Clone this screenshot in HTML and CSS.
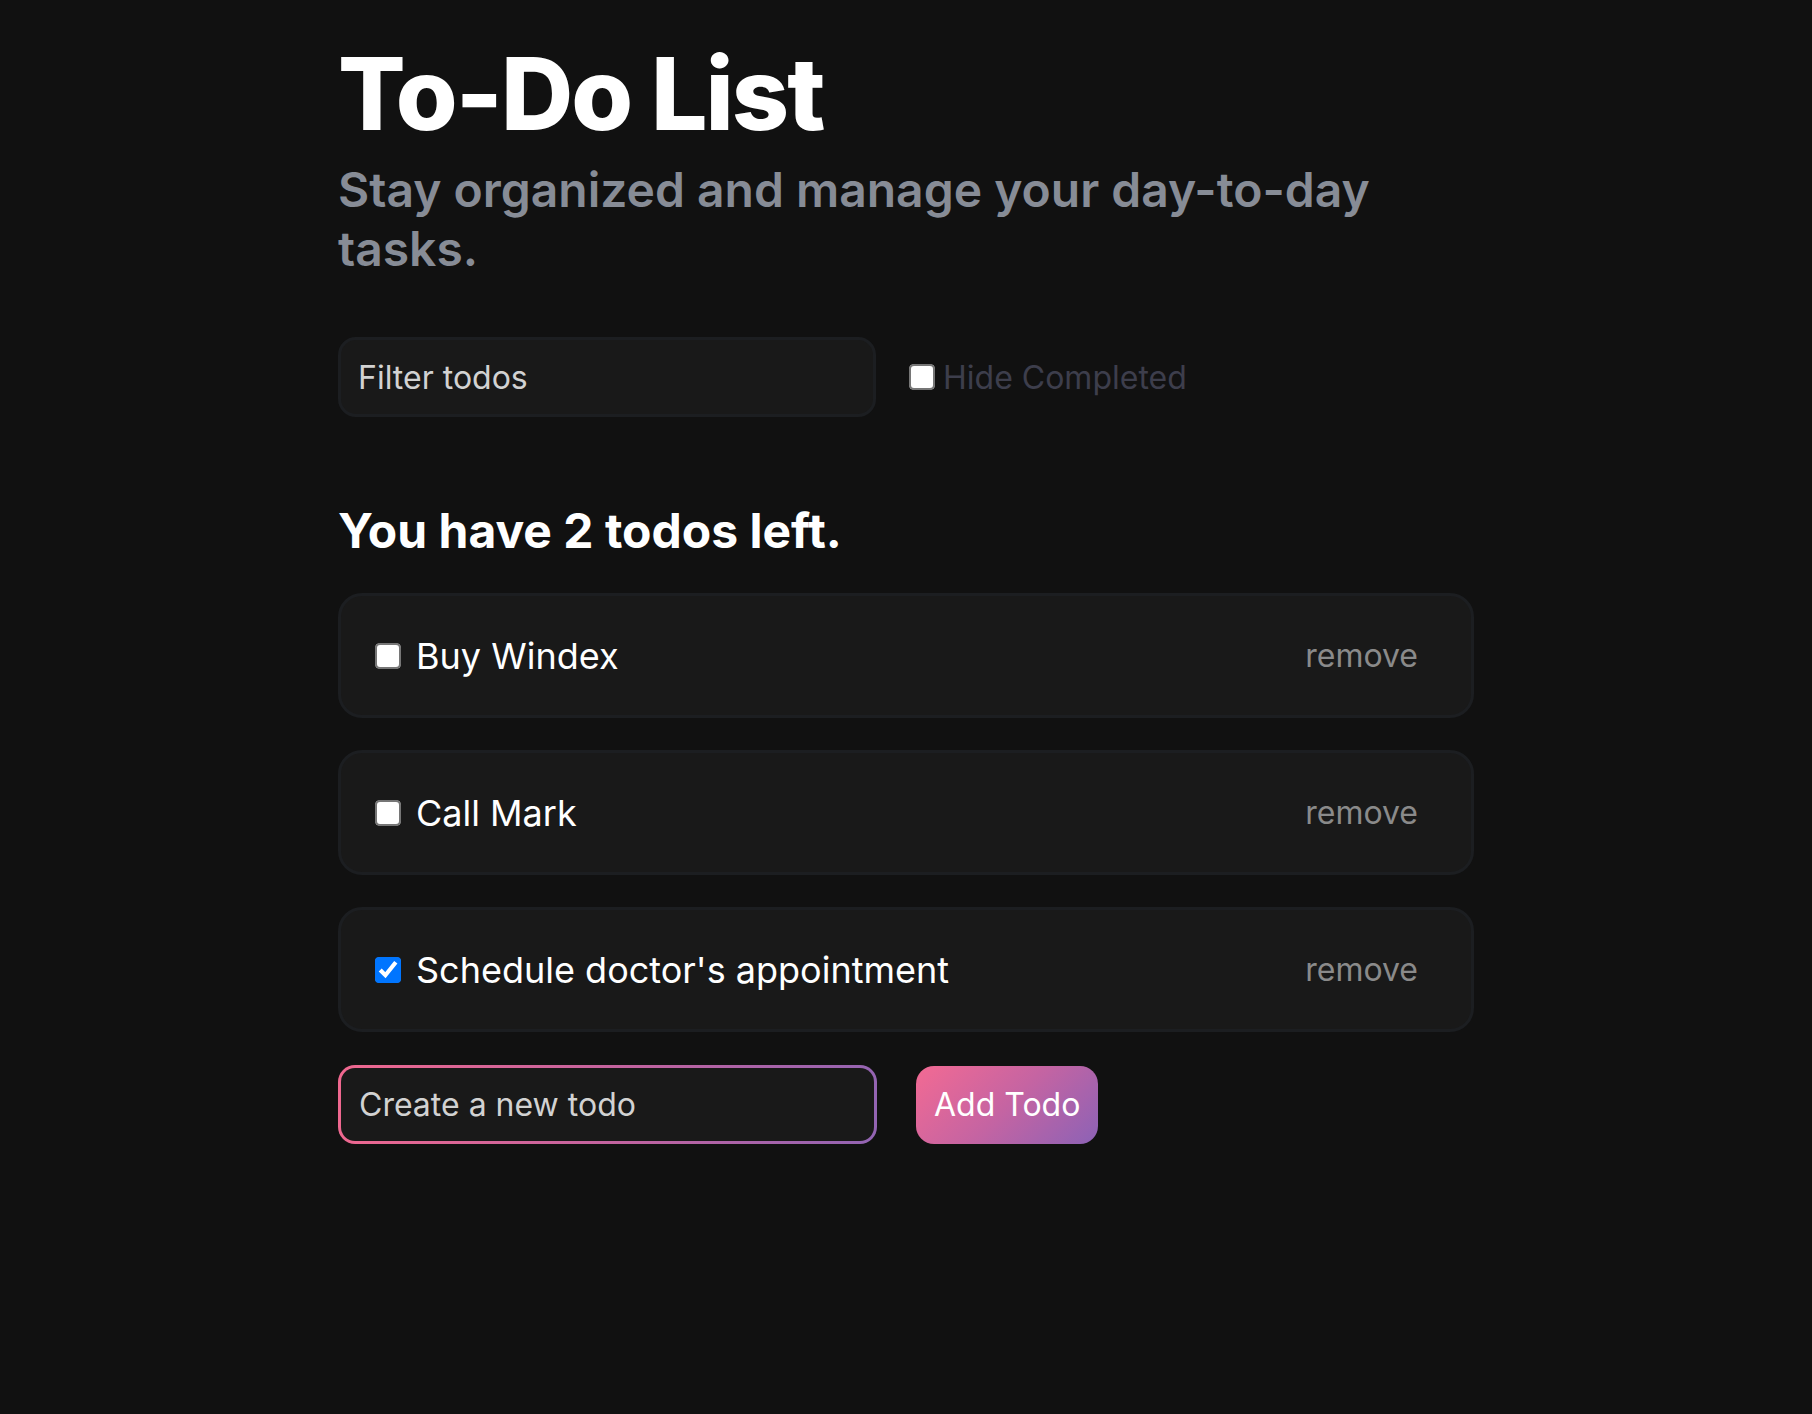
FILE: index.html
```html
<!DOCTYPE html>
<html lang="en">
<head>
<meta charset="utf-8">
<title>To-Do List</title>
<link rel="stylesheet" href="styles.css">
</head>
<body>
<main class="page">
  <h1 class="title">To-Do List</h1>
  <p class="subtitle">Stay organized and manage your day-to-day tasks.</p>

  <div class="filter-row">
    <input class="filter" type="text" placeholder="Filter todos">
    <label class="hide">
      <input class="check" type="checkbox">
      <span>Hide Completed</span>
    </label>
  </div>

  <h2 class="count">You have 2 todos left.</h2>

  <ul class="todos">
    <li class="todo">
      <label class="todo-label">
        <input class="check" type="checkbox">
        <span>Buy Windex</span>
      </label>
      <button class="remove" type="button">remove</button>
    </li>
    <li class="todo">
      <label class="todo-label">
        <input class="check" type="checkbox">
        <span>Call Mark</span>
      </label>
      <button class="remove" type="button">remove</button>
    </li>
    <li class="todo">
      <label class="todo-label">
        <input class="check" type="checkbox" checked>
        <span>Schedule doctor's appointment</span>
      </label>
      <button class="remove" type="button">remove</button>
    </li>
  </ul>

  <form class="create-row" onsubmit="return false">
    <input class="create" type="text" placeholder="Create a new todo">
    <button class="add" type="submit">Add Todo</button>
  </form>
</main>
</body>
</html>
```

FILE: styles.css
```css
html, body {
  margin: 0;
  background: #111111;
}

body {
  font-family: Inter, "Noto Sans", "Liberation Sans", sans-serif;
  color: #ffffff;
}

.page {
  width: 1136px;
  margin: 0 auto;
  padding-top: 46px;
}

.title {
  margin: 0;
  font-size: 100px;
  line-height: 96px;
  font-weight: 800;
  letter-spacing: -0.02em;
  color: #ffffff;
}

.subtitle {
  margin: 18px 0 0;
  font-size: 48px;
  line-height: 59px;
  font-weight: 600;
  color: #878c96;
}

.filter-row {
  display: flex;
  align-items: center;
  gap: 33px;
  margin-top: 59px;
}

.filter {
  box-sizing: border-box;
  width: 538px;
  height: 80px;
  border: 3px solid #1c1e21;
  border-radius: 18px;
  background: #191919;
  padding: 0 17px;
  font-family: inherit;
  font-size: 32px;
  color: #dddddd;
  outline: none;
}

.filter::placeholder,
.create::placeholder {
  color: #d2d2d2;
  opacity: 1;
}

.hide {
  display: flex;
  align-items: center;
  gap: 8px;
  font-size: 32px;
  color: #3d3e4c;
}

.check {
  width: 13px;
  height: 13px;
  margin: 0;
  zoom: 2;
  flex: none;
}

.count {
  margin: 85px 0 0;
  font-size: 48px;
  line-height: 58px;
  font-weight: 700;
  letter-spacing: 0;
  color: #ffffff;
}

.todos {
  list-style: none;
  margin: 33px 0 0;
  padding: 0;
  display: flex;
  flex-direction: column;
  gap: 32px;
}

.todo {
  box-sizing: border-box;
  height: 125px;
  border: 3px solid #1c1e21;
  border-radius: 24px;
  background: #191919;
  display: flex;
  align-items: center;
  padding: 0 33px 0 34px;
}

.todo-label {
  flex: 1;
  display: flex;
  align-items: center;
  gap: 15px;
  font-size: 36px;
  color: #ffffff;
}

.remove {
  background: none;
  border: 0;
  padding: 0 20px;
  font-family: inherit;
  font-size: 32px;
  color: #8a8a8a;
  cursor: pointer;
}

.create-row {
  display: flex;
  align-items: center;
  gap: 39px;
  margin: 33px 0 0;
}

.create {
  box-sizing: border-box;
  width: 539px;
  height: 79px;
  border: 3px solid transparent;
  border-radius: 17px;
  background:
    linear-gradient(#191919, #191919) padding-box,
    linear-gradient(100deg, #f0688f 0%, #c063a0 55%, #9264b3 100%) border-box;
  padding: 0 18px;
  font-family: inherit;
  font-size: 32px;
  color: #dddddd;
  outline: none;
}

.add {
  box-sizing: border-box;
  height: 78px;
  padding: 0 18px;
  border: 0;
  border-radius: 18px;
  background: linear-gradient(135deg, #f36a93 0%, #c564a2 50%, #8c62b6 100%);
  font-family: inherit;
  font-size: 32px;
  color: #ffffff;
  cursor: pointer;
}
```
